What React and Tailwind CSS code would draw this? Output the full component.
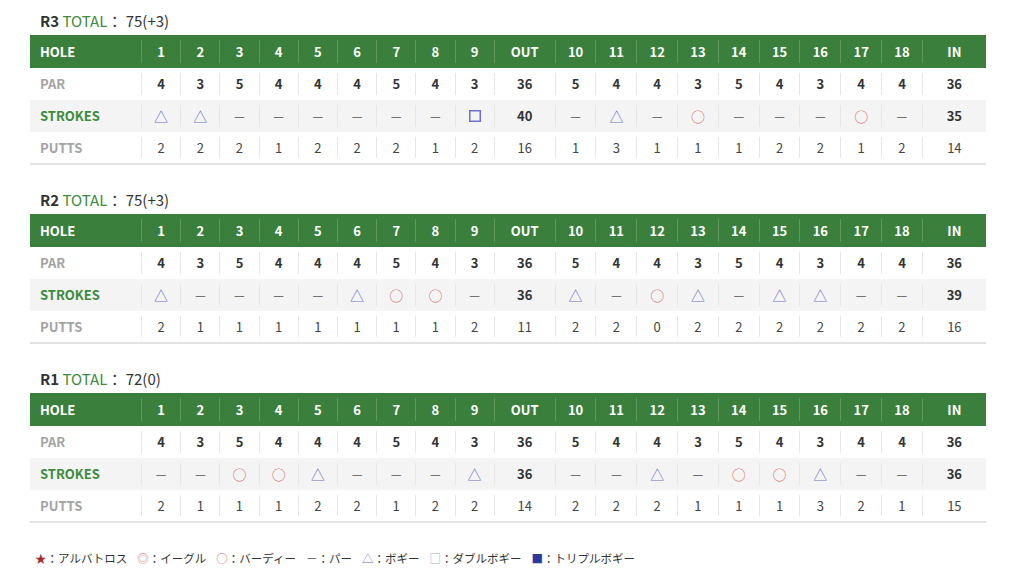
import React from 'react'

const PAR = [4, 3, 5, 4, 4, 4, 5, 4, 3, 36, 5, 4, 4, 3, 5, 4, 3, 4, 4, 36]
const HOLES = ['1', '2', '3', '4', '5', '6', '7', '8', '9', 'OUT', '10', '11', '12', '13', '14', '15', '16', '17', '18', 'IN']

const rounds = [
  {
    name: 'R3',
    total: '75(+3)',
    strokes: ['b', 'b', 'p', 'p', 'p', 'p', 'p', 'p', 'd', '40', 'p', 'b', 'p', 'o', 'p', 'p', 'p', 'o', 'p', '35'],
    putts: [2, 2, 2, 1, 2, 2, 2, 1, 2, 16, 1, 3, 1, 1, 1, 2, 2, 1, 2, 14],
  },
  {
    name: 'R2',
    total: '75(+3)',
    strokes: ['b', 'p', 'p', 'p', 'p', 'b', 'o', 'o', 'p', '36', 'b', 'p', 'o', 'b', 'p', 'b', 'b', 'p', 'p', '39'],
    putts: [2, 1, 1, 1, 1, 1, 1, 1, 2, 11, 2, 2, 0, 2, 2, 2, 2, 2, 2, 16],
  },
  {
    name: 'R1',
    total: '72(0)',
    strokes: ['p', 'p', 'o', 'o', 'b', 'p', 'p', 'p', 'b', '36', 'p', 'p', 'b', 'p', 'o', 'o', 'b', 'p', 'p', '36'],
    putts: [2, 1, 1, 1, 2, 2, 1, 2, 2, 14, 2, 2, 2, 1, 1, 1, 3, 2, 1, 15],
  },
]

const gridCols = 'grid grid-cols-[111px_repeat(9,39.2px)_61px_repeat(9,40.8px)_64px]'

function Mark({ v }) {
  if (v === 'b') return <span className="text-[14px] text-[#6f6fcf]">△</span>
  if (v === 'o') return <span className="text-[14px] text-[#d46a6a]">○</span>
  if (v === 'd')
    return (
      <svg width="12" height="12" viewBox="0 0 12 12">
        <rect x="0.75" y="0.75" width="10.5" height="10.5" fill="none" stroke="#6f6fd2" strokeWidth="1.5" />
      </svg>
    )
  if (v === 'p') return <span className="text-[12px] text-[#555]">—</span>
  return <span className="font-bold text-[#333]">{v}</span>
}

function Cell({ children, header }) {
  return (
    <div className="py-[5px]">
      <div
        className={`flex h-full items-center justify-center border-l ${header ? 'border-white/20' : 'border-[#e6e6e6]'}`}
      >
        {children}
      </div>
    </div>
  )
}

function Row({ label, labelClass, bg = '', h, children }) {
  return (
    <div className={`${gridCols} ${bg} ${h}`}>
      <div className={`flex items-center pl-[10px] font-bold ${labelClass}`}>{label}</div>
      {children}
    </div>
  )
}

function Scorecard({ round }) {
  return (
    <section>
      <div className="h-5 pl-[10px] text-[15px] leading-5 text-[#333]">
        <span className="font-bold">{round.name}</span>
        <span className="text-[#3d8b3d]"> TOTAL</span>： {round.total}
      </div>
      <div className="mt-1 border-b-2 border-[#e3e3e3] text-[13px]">
        <Row label="HOLE" labelClass="text-white" bg="bg-[#3a7f3b]" h="h-[33px]">
          {HOLES.map((h) => (
            <Cell key={h} header>
              <span className="font-bold text-white">{h}</span>
            </Cell>
          ))}
        </Row>
        <Row label="PAR" labelClass="text-[#a3a3a3]" h="h-8">
          {PAR.map((p, i) => (
            <Cell key={i}>
              <span className="font-bold text-[#333]">{p}</span>
            </Cell>
          ))}
        </Row>
        <Row label="STROKES" labelClass="text-[#3d8b3d]" bg="bg-[#f4f4f4]" h="h-8">
          {round.strokes.map((s, i) => (
            <Cell key={i}>
              <Mark v={s} />
            </Cell>
          ))}
        </Row>
        <Row label="PUTTS" labelClass="text-[#a3a3a3]" h="h-[31px]">
          {round.putts.map((p, i) => (
            <Cell key={i}>
              <span className="text-[#444]">{p}</span>
            </Cell>
          ))}
        </Row>
      </div>
    </section>
  )
}

function Legend() {
  const items = [
    { mark: '★', cls: 'text-[#a52a2a]', text: 'アルバトロス' },
    { mark: '◎', cls: 'text-[#d46a6a]', text: 'イーグル' },
    { mark: '○', cls: 'text-[#d46a6a]', text: 'バーディー' },
    { mark: '－', cls: 'text-[#555]', text: 'パー' },
    { mark: '△', cls: 'text-[#7474cf]', text: 'ボギー' },
    { mark: '□', cls: 'text-[#9a9ade]', text: 'ダブルボギー' },
    { mark: '■', cls: 'text-[#2c3a9e]', text: 'トリプルボギー' },
  ]
  return (
    <div className="mt-[27px] flex items-center gap-[10px] pl-[5px] text-[11.5px] leading-4 text-[#333]">
      {items.map((it) => (
        <div key={it.text} className="flex items-center">
          <span className={it.cls}>{it.mark}</span>
          <span>：{it.text}</span>
        </div>
      ))}
    </div>
  )
}

export default function App() {
  return (
    <div
      className="min-h-[582px] w-[1024px] bg-white px-[30px] pt-[11px]"
      style={{ fontFamily: '"Noto Sans CJK JP", "Noto Sans", sans-serif' }}
    >
      <div className="flex w-[956px] flex-col gap-[25px]">
        {rounds.map((r) => (
          <Scorecard key={r.name} round={r} />
        ))}
      </div>
      <Legend />
    </div>
  )
}
